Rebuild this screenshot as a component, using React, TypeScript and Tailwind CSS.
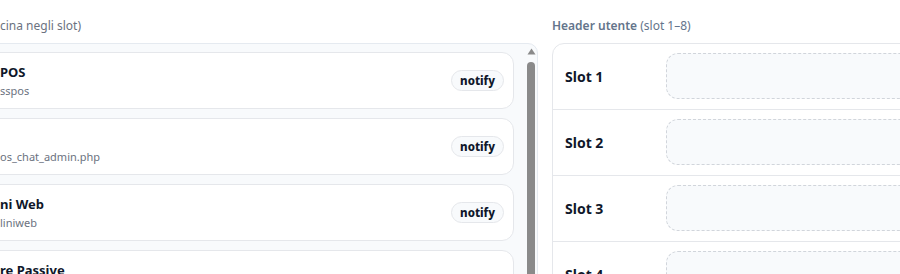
import React from "react";

const plugins = [
  { title: "POS", sub: "sspos" },
  { title: "", sub: "os_chat_admin.php" },
  { title: "ni Web", sub: "liniweb" },
  { title: "re Passive", sub: "ive" },
];

const slots = [1, 2, 3, 4, 5];

export default function App() {
  return (
    <div
      className="w-[900px] h-[274px] overflow-hidden bg-white text-[#0f172a]"
      style={{ fontFamily: '"Noto Sans", "Open Sans", sans-serif' }}
    >
      <div className="flex gap-[14px] pt-[18px]">
        {/* Left column */}
        <div className="ml-[-22px] w-[560px] shrink-0 flex flex-col">
          <div className="h-[16px] pl-[22px] text-[12px] leading-[16px] text-[#6b7280]">
            cina negli slot)
          </div>
          <div className="mt-[9px] h-[260px] flex bg-[#f8fafc] border border-[#e5eaf0] rounded-tr-[10px] overflow-hidden">
            <div className="flex-1 flex flex-col gap-[9px] pt-[8px] pl-[8px] pr-[11px]">
              {plugins.map((p, i) => (
                <div
                  key={i}
                  className="h-[57px] shrink-0 flex items-center justify-between bg-white border border-[#e5e7eb] rounded-[12px] pl-[12px] pr-[9px]"
                >
                  <div className="flex flex-col">
                    <div className="text-[13px] font-bold leading-[18px] h-[18px] text-[#0f172a]">
                      {p.title}
                    </div>
                    <div className="mt-[3px] text-[11px] leading-[14px] text-[#6b7280]">
                      {p.sub}
                    </div>
                  </div>
                  {i < 3 && (
                    <div className="h-[21px] px-[8px] flex items-center rounded-full border border-[#e5e7eb] bg-[#f8fafc] text-[11.5px] font-extrabold text-[#0f172a]">
                      notify
                    </div>
                  )}
                </div>
              ))}
            </div>
            <div className="w-[12px] shrink-0 flex flex-col items-center pt-[4px]">
              <svg width="9" height="7" viewBox="0 0 9 7">
                <path d="M4.5 0.5 L8.5 6.5 L0.5 6.5 Z" fill="#8a8a8a" />
              </svg>
              <div className="mt-[7px] w-[8px] flex-1 rounded-t-full bg-[#8a8a8a]" />
            </div>
          </div>
        </div>

        {/* Right column */}
        <div className="w-[420px] shrink-0 flex flex-col">
          <div className="h-[16px] text-[12px] leading-[16px] text-[#64748b]">
            <span className="font-semibold">Header utente</span> (slot 1–8)
          </div>
          <div className="mt-[9px] border border-[#e5e7eb] rounded-tl-[12px] bg-white">
            {slots.map((s, i) => (
              <div
                key={s}
                className={
                  "grid grid-cols-[101px_1fr] items-center px-[12px] pt-[9px] pb-[10px] " +
                  (i > 0 ? "border-t border-[#e5e7eb]" : "")
                }
              >
                <div className="text-[14px] font-bold text-[#0f172a]">Slot {s}</div>
                <div className="h-[46px] rounded-[12px] border border-dashed border-[#d1d5db] bg-[#f8fafc]" />
              </div>
            ))}
          </div>
        </div>
      </div>
    </div>
  );
}
